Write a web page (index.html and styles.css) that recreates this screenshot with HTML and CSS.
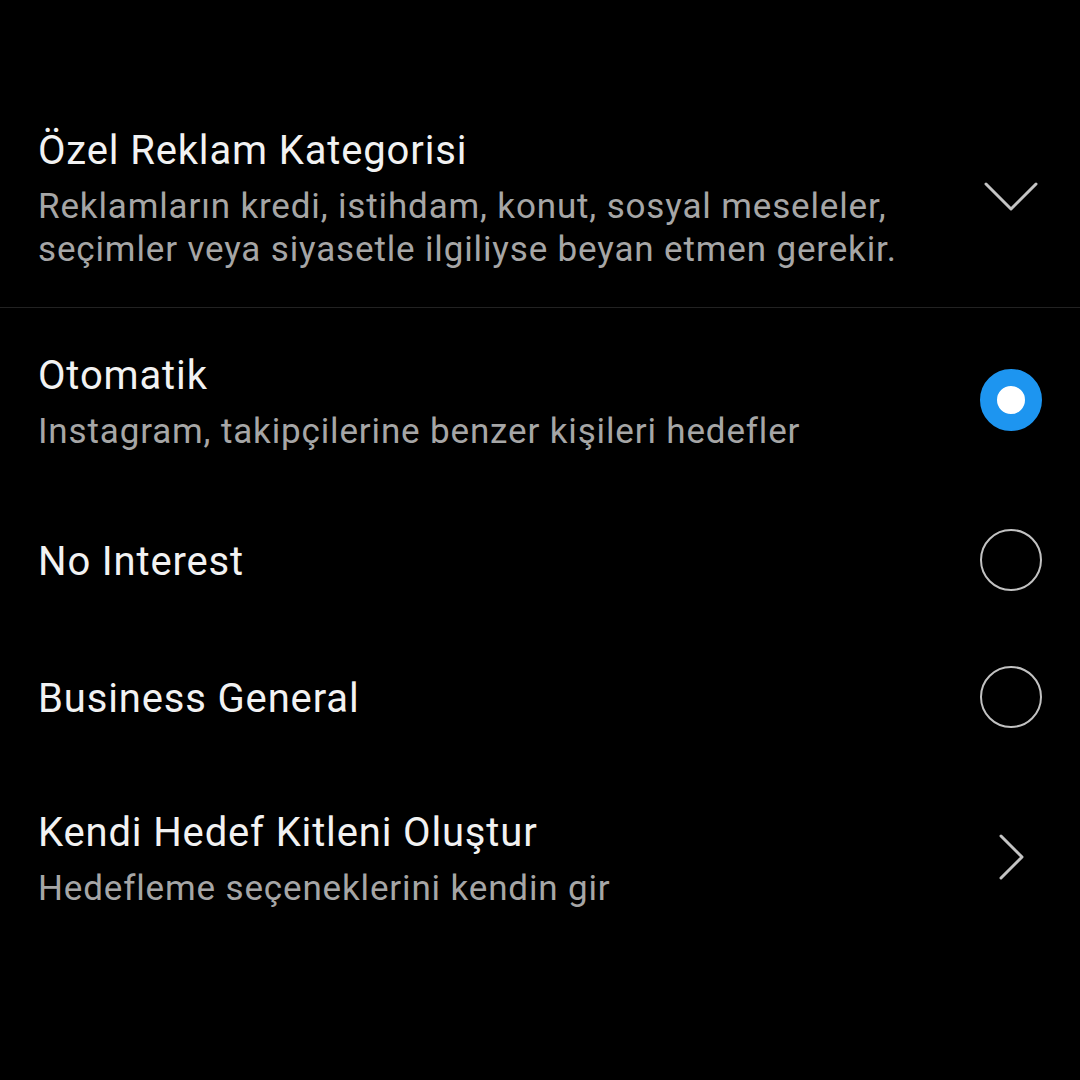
FILE: index.html
```html
<!DOCTYPE html>
<html lang="tr">
<head>
<meta charset="utf-8">
<title>Hedef Kitle</title>
<link rel="stylesheet" href="styles.css">
</head>
<body>
<div class="screen">
  <section class="category">
    <div class="text">
      <div class="title">Özel Reklam Kategorisi</div>
      <div class="sub">Reklamların kredi, istihdam, konut, sosyal meseleler,<br>seçimler veya siyasetle ilgiliyse beyan etmen gerekir.</div>
    </div>
    <div class="icon">
      <svg width="62" height="40" viewBox="0 0 62 40"><polyline points="6,7 31,32 56,7" fill="none" stroke="#c4c4c4" stroke-width="3" stroke-linecap="round" stroke-linejoin="round"/></svg>
    </div>
  </section>
  <section class="options">
    <div class="row">
      <div class="text">
        <div class="title">Otomatik</div>
        <div class="sub">Instagram, takipçilerine benzer kişileri hedefler</div>
      </div>
      <div class="icon"><span class="radio checked"></span></div>
    </div>
    <div class="row single">
      <div class="text">
        <div class="title">No Interest</div>
      </div>
      <div class="icon"><span class="radio"></span></div>
    </div>
    <div class="row single">
      <div class="text">
        <div class="title">Business General</div>
      </div>
      <div class="icon"><span class="radio"></span></div>
    </div>
    <div class="row">
      <div class="text">
        <div class="title">Kendi Hedef Kitleni Oluştur</div>
        <div class="sub">Hedefleme seçeneklerini kendin gir</div>
      </div>
      <div class="icon">
        <svg width="62" height="50" viewBox="0 0 62 50"><polyline points="21,4 42,25 21,46" fill="none" stroke="#c4c4c4" stroke-width="3" stroke-linecap="round" stroke-linejoin="round"/></svg>
      </div>
    </div>
  </section>
</div>
</body>
</html>
```

FILE: styles.css
```css
html, body {
  margin: 0;
  padding: 0;
  background: #000;
}
.screen {
  width: 1080px;
  height: 1080px;
  background: #000;
  font-family: Roboto, "Noto Sans", sans-serif;
  color: #f2f2f2;
}
.category {
  display: flex;
  align-items: center;
  justify-content: space-between;
  padding: 127px 38px 36px 38px;
  border-bottom: 1px solid #222;
}
.category .icon {
  padding-bottom: 4px;
}
.text {
  display: flex;
  flex-direction: column;
}
.row .text {
  padding-top: 5px;
}
.title {
  font-size: 40px;
  line-height: 48px;
  letter-spacing: 0.85px;
  color: #f2f2f2;
}
.sub {
  font-size: 35px;
  line-height: 43px;
  letter-spacing: 0.85px;
  color: #a6a6a6;
  margin-top: 10px;
}
.icon {
  width: 62px;
  display: flex;
  justify-content: center;
  align-items: center;
  flex-shrink: 0;
}
.options {
  display: flex;
  flex-direction: column;
  padding: 0 38px;
}
.row {
  display: flex;
  align-items: center;
  justify-content: space-between;
  height: 183px;
}
.row.single {
  height: 137px;
}
.radio {
  box-sizing: border-box;
  width: 62px;
  height: 62px;
  border-radius: 50%;
  border: 2.5px solid #c2c2c2;
}
.radio.checked {
  border: 17px solid #1d95f0;
  background: #fff;
}
```
